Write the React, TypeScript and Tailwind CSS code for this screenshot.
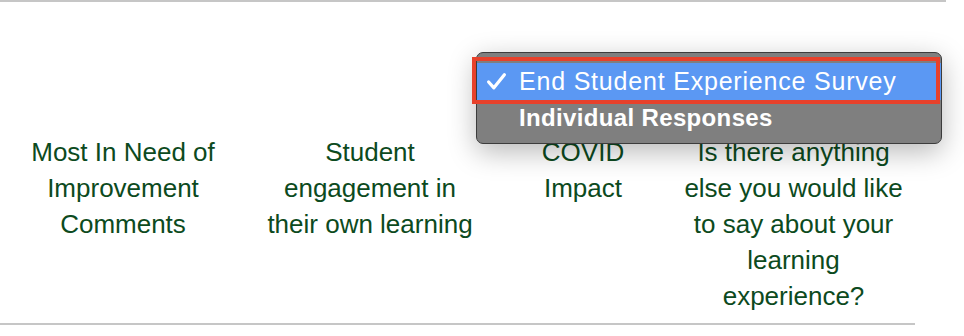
import React from "react";

const columns = [
  { w: "w-[246px]", lines: ["Most In Need of", "Improvement", "Comments"] },
  { w: "w-[248px]", lines: ["Student", "engagement in", "their own learning"] },
  { w: "w-[178px]", lines: ["COVID", "Impact"] },
  {
    w: "w-[243px]",
    lines: ["Is there anything", "else you would like", "to say about your", "learning", "experience?"],
  },
];

function SurveyMenu() {
  return (
    <div className="absolute left-[476px] top-[52px] w-[466px] h-[92px]">
      <div className="h-full w-full rounded-[7px] border border-[#3c3c3c] bg-[#7f7f7f] pt-[10px] shadow-[0_8px_28px_rgba(0,0,0,0.28)] overflow-hidden">
        <div className="flex h-[37px] items-center bg-[#5b98f3] text-white">
          <svg className="ml-[9px] w-[21px] h-[21px]" viewBox="0 0 20 20" aria-hidden>
            <polyline
              points="2.5,10.5 7.5,16 17.5,3.5"
              fill="none"
              stroke="white"
              strokeWidth="3.1"
              strokeLinecap="round"
              strokeLinejoin="round"
            />
          </svg>
          <span className="ml-[12px] text-[25px] tracking-[0.8px] leading-none">End Student Experience Survey</span>
        </div>
        <div className="flex h-[35px] items-center pl-[42px] text-white">
          <span className="text-[24px] tracking-[0.35px] font-bold leading-none">Individual Responses</span>
        </div>
      </div>
      <div className="absolute -left-[4px] top-[5px] w-[468px] h-[47px] border-4 border-[#e7412b]" />
    </div>
  );
}

export default function App() {
  return (
    <div className="relative w-[964px] h-[336px] overflow-hidden bg-white font-['Liberation_Sans',Arial,sans-serif]">
      <div className="w-[946px] h-[2px] bg-[#c6c6c6]" />
      <div className="w-[915px] mt-[132px] pb-[9px] border-b-2 border-[#c6c6c6] flex items-start">
        {columns.map((c, i) => (
          <div key={i} className={`${c.w} flex flex-col items-center text-[26px] leading-[36px] text-[#0c4a20]`}>
            {c.lines.map((l) => (
              <span key={l} className="whitespace-nowrap">{l}</span>
            ))}
          </div>
        ))}
      </div>
      <SurveyMenu />
    </div>
  );
}
